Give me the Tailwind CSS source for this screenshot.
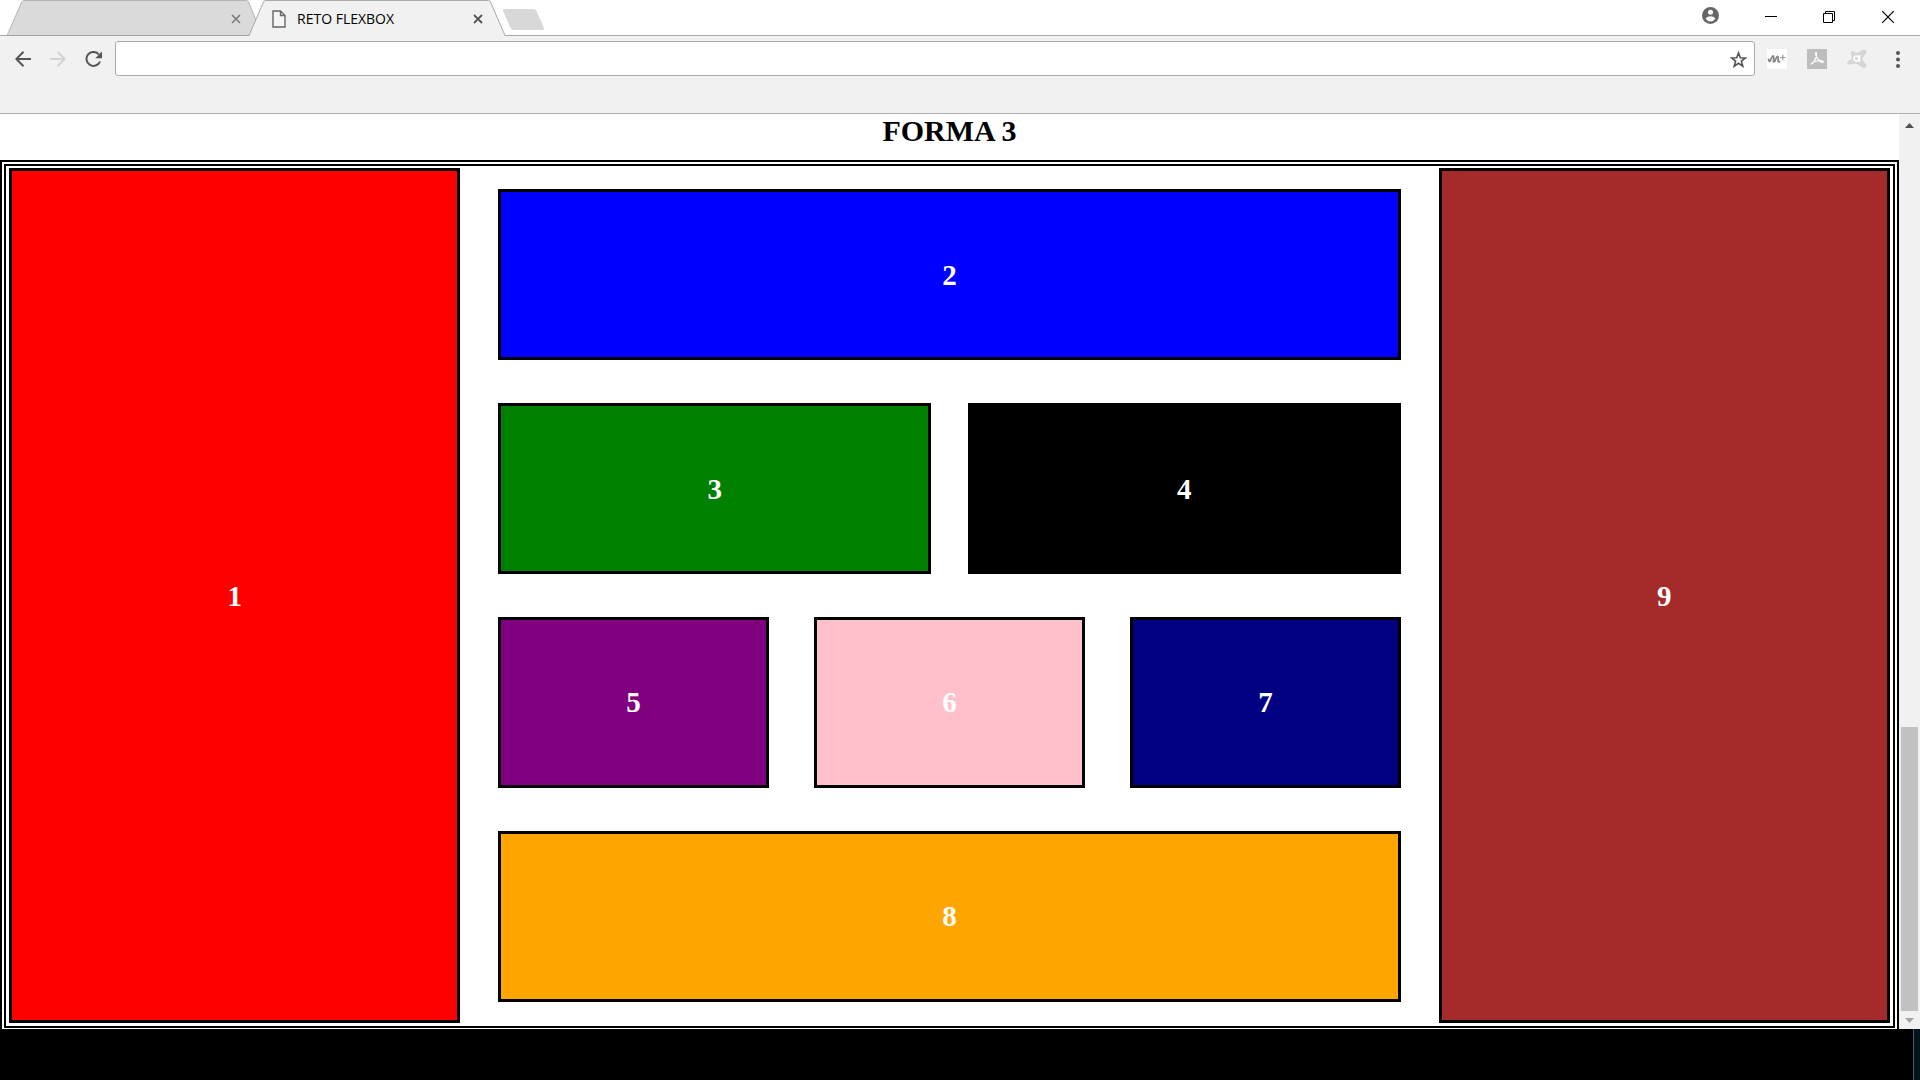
<!DOCTYPE html>
<html lang="es">
<head>
<meta charset="utf-8">
<title>RETO FLEXBOX</title>
<script src="https://cdn.jsdelivr.net/npm/@tailwindcss/browser@4"></script>
</head>
<body class="flex h-screen flex-col overflow-hidden bg-black">
<header class="shrink-0">
  <!-- Tab strip -->
  <div class="relative flex h-9 justify-between bg-white">
    <div class="absolute inset-x-0 bottom-0 h-px bg-[#a9a9a9]"></div>
    <nav class="flex pl-[7px]" aria-label="Tabs">
      <div class="relative flex h-9 w-[250px] items-center justify-end pr-4">
        <svg class="absolute inset-0" width="250" height="36" viewBox="0 0 250 36"><path d="M0 35.5 15 1.500Q15.500 .5 17 .5H239.500Q241 .5 241.500 2L249 20V35.500Z" fill="#dadada" stroke="#b4b4b4"/><path d="M0 35.500H250" stroke="#a0a0a0"/></svg>
        <button class="relative mt-0.5 grid size-2.5 place-items-center" aria-label="Close tab"><svg width="10" height="10" viewBox="0 0 10 10"><path d="m1 1 8 8M9 1 1 9" stroke="#777" stroke-width="1.500"/></svg></button>
      </div>
      <div class="relative -ml-2 flex h-9 w-[257px] items-center pl-[23px]">
        <svg class="absolute inset-0" width="257" height="36" viewBox="0 0 257 36"><path d="M0 36 14.500 2Q15 .5 17 .5H239.500Q241 .5 241.500 2L256 35.500H257V36Z" fill="#f1f1f1"/><path d="M0 35.500 14.500 2Q15 .5 17 .5H239.500Q241 .5 241.500 2L256 35.500H257" fill="none" stroke="#a9a9a9"/></svg>
        <svg class="relative mt-0.5" width="14" height="18" viewBox="0 0 14 18"><path d="M1 1H8.500L13 5.500V17H1ZM8.500 1V5.500H13" fill="#f5f5f5" stroke="#666" stroke-width="1.400"/></svg>
        <span class="relative mt-px ml-[11px] flex-1 font-['Open_Sans',sans-serif] text-sm leading-5 text-black">RETO FLEXBOX</span>
        <button class="relative mt-0.5 mr-[23px] grid size-2.5 place-items-center" aria-label="Close tab"><svg width="10" height="10" viewBox="0 0 10 10"><path d="m1 1 8 8M9 1 1 9" stroke="#555" stroke-width="1.800"/></svg></button>
      </div>
      <button class="-ml-1 mt-[9px] h-[21px] w-[43px]" aria-label="New tab"><svg width="43" height="21" viewBox="0 0 43 21"><path d="M2 0H31Q33.500 0 34.500 2L42 19Q42.500 21 40.500 21H12Q9.500 21 8.500 19L1 2Q.5 0 2 0Z" fill="#d8d8d8"/></svg></button>
    </nav>
    <div class="flex pr-[26px]">
      <button class="mt-[7px] mr-[46px] h-4" aria-label="Profile"><svg width="17" height="17" viewBox="0 0 17 17"><circle cx="8.500" cy="8.500" r="8.500" fill="#666"/><circle cx="8.500" cy="5.300" r="2.500" fill="#fff"/><path d="M3.500 11.500Q5.500 9.200 8.500 9.200T13.500 11.500Q11.500 14.500 8.500 14.500T3.500 11.500Z" fill="#fff"/></svg></button>
      <button class="mt-[11px] mr-[46px] h-3" aria-label="Minimize"><svg width="12" height="12"><path d="M0 5.500H12" stroke="#000"/></svg></button>
      <button class="mt-[11px] mr-[47px] h-3" aria-label="Restore"><svg width="12" height="12" fill="none" stroke="#000"><path d="M.5 2.500H9.500V11.500H.5ZM2.500 2.500V.5H11.500V9.500H9.500"/></svg></button>
      <button class="mt-[11px] h-3" aria-label="Close"><svg width="12" height="12"><path d="M0 0 12 12M12 0 0 12" stroke="#000" stroke-width="1.200"/></svg></button>
    </div>
  </div>
  <!-- Toolbar -->
  <div class="flex h-[78px] items-start border-b border-[#b0b0b0] bg-[#f1f1f1] pt-[5px] pr-5 pl-[15px]">
    <button class="mt-2.5 h-4" aria-label="Back"><svg width="16" height="16" viewBox="0 0 16 16" fill="none" stroke="#555" stroke-width="2"><path d="M16 8H2M8.500 .8 1.300 8l7.200 7.200"/></svg></button>
    <button class="mt-2.5 ml-[19px] h-4" aria-label="Forward"><svg width="16" height="16" viewBox="0 0 16 16" fill="none" stroke="#d2d2d2" stroke-width="2"><path d="M0 8H14M7.500 .8 14.700 8l-7.200 7.200"/></svg></button>
    <button class="mt-2.5 ml-[19px] h-4" aria-label="Reload"><svg width="17" height="17" viewBox="0 0 17 17"><path d="M13.800 3.400A7 7 0 1 0 15 10.500" fill="none" stroke="#555" stroke-width="2"/><path d="M17 .5V7.200H10.300Z" fill="#555"/></svg></button>
    <div class="relative ml-[13px] flex-1">
      <input type="text" aria-label="Address" class="block h-[35px] w-full rounded-[3px] border border-[#a9a9a9] bg-white pr-8 pl-2 outline-none">
      <button class="absolute top-2.5 right-2 h-4" aria-label="Bookmark"><svg width="17" height="17" viewBox="0 0 17 17"><path d="M8.500 1.900 10.300 6.700 15.400 6.900 11.400 10.100 12.800 15.200 8.500 12.300 4.200 15.200 5.600 10.100 1.600 6.900 6.700 6.700Z" fill="none" stroke="#555" stroke-width="1.600"/></svg></button>
    </div>
    <button class="mt-2 ml-3 h-5" aria-label="M+"><svg width="20" height="20"><path d="M0 0H20V20H0Z" fill="#fff"/><path d="M1.500 9.500Q1.800 14 3.500 11.500Q5.500 6 6.500 7Q7 7.500 6.500 12Q6.500 14 8 12Q10 6.500 11 7.500Q11.500 8 11 11.500Q11.500 14 13 12" fill="none" stroke="#858585" stroke-width="1.700"/><path d="M13 8.500H18.500M15.800 5.700V11.300" stroke="#999" stroke-width="1.200"/></svg></button>
    <button class="mt-2 ml-5 h-5" aria-label="Acrobat"><svg width="20" height="20"><path d="M0 0H20V20H0Z" fill="#bdbdbd"/><path d="M4 15.500C7 14 10 8 9.500 4.500C9 2.500 8 4 9 6.500C10.500 10.500 13 13.500 16 13.500C17.500 12.500 14 10.500 10 12C7.500 12.500 4.500 14 4 15.500" fill="none" stroke="#fff" stroke-width="1.200"/></svg></button>
    <button class="mt-2 ml-5 h-5" aria-label="Avast"><svg width="20" height="20"><path d="M5 2Q7 2 9 4Q12 4 15 1Q18-.5 19.500 2Q20 4 17 7Q15 9 16 12L19 15Q20 18 17.500 19Q15 19.500 12 16Q8 14 4 15.500Q0 16 0 13.500Q1 11.500 4 10.500Q5.500 8 4 5Q3 2.500 5 2Z" fill="#d5d5d5"/><circle cx="9.500" cy="9.500" r="2.500" fill="none" stroke="#fff" stroke-width="1.600"/><path d="M12.500 6V13" stroke="#fff" stroke-width="1.600"/></svg></button>
    <button class="mt-2.5 ml-[29px] h-4" aria-label="Menu"><svg width="4" height="17" fill="#555"><circle cx="2" cy="2" r="2"/><circle cx="2" cy="8.500" r="2"/><circle cx="2" cy="15" r="2"/></svg></button>
  </div>
</header>

<div class="flex min-h-0 flex-1 overflow-hidden bg-white">
  <main class="flex min-w-0 flex-1 flex-col font-['Liberation_Serif',serif] text-[29px] leading-8 font-bold text-white">
    <h1 class="h-[46px] shrink-0 text-center text-[30px] leading-[34px] text-black">FORMA 3</h1>
    <section class="-mb-[3px] flex min-h-0 flex-1 justify-between border-[6px] border-double border-black px-[3px] pt-0.5 pb-[3px]">
      <div class="flex w-[24%] items-center justify-center border-[3px] border-black bg-[red]">1</div>
      <div class="flex w-[48%] flex-col justify-around">
        <div class="flex h-1/5 items-center justify-center border-[3px] border-black bg-[blue]">2</div>
        <div class="flex h-1/5 justify-between">
          <div class="flex w-[48%] items-center justify-center border-[3px] border-black bg-[green]">3</div>
          <div class="flex w-[48%] items-center justify-center border-[3px] border-black bg-black">4</div>
        </div>
        <div class="flex h-1/5 justify-between">
          <div class="flex w-[30%] items-center justify-center border-[3px] border-black bg-[purple]">5</div>
          <div class="flex w-[30%] items-center justify-center border-[3px] border-black bg-[pink]">6</div>
          <div class="flex w-[30%] items-center justify-center border-[3px] border-black bg-[navy]">7</div>
        </div>
        <div class="flex h-1/5 items-center justify-center border-[3px] border-black bg-[orange]">8</div>
      </div>
      <div class="flex w-[24%] items-center justify-center border-[3px] border-black bg-[brown]">9</div>
    </section>
  </main>
  <!-- Scrollbar -->
  <div class="flex w-[21px] shrink-0 flex-col items-center bg-[#f1f1f1]">
    <svg class="mt-[9px] shrink-0" width="9" height="5"><path d="M0 5 4.500 0 9 5Z" fill="#505050"/></svg>
    <div class="flex-1"></div>
    <div class="h-[31%] w-[17px] bg-[#c1c1c1]"></div>
    <svg class="mt-[7px] mb-[6px] shrink-0" width="9" height="5"><path d="M0 0 4.500 5 9 0Z" fill="#a3a3a3"/></svg>
  </div>
</div>

<footer class="flex h-[51px] shrink-0 justify-end bg-black">
  <div class="w-[7px] border-l border-[#505960] bg-[#04141b]"></div>
</footer>
</body>
</html>
